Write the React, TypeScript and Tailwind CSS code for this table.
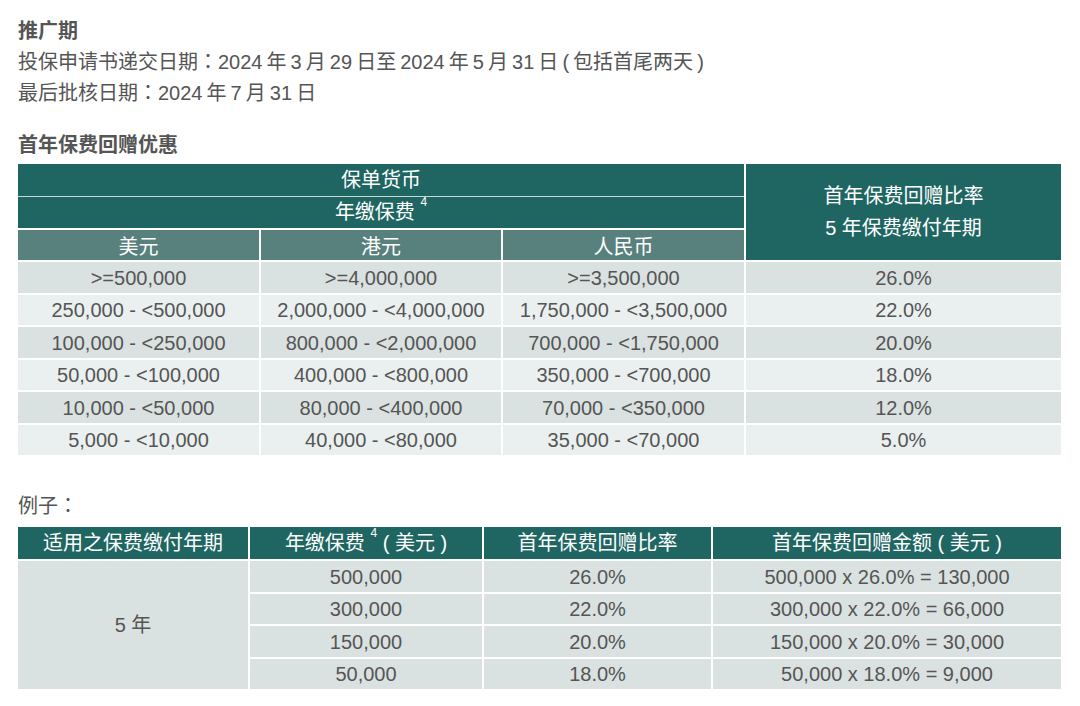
const font = { fontFamily: '"Liberation Sans", "Noto Sans CJK SC", sans-serif' };

const tiers = [
  [">=500,000", ">=4,000,000", ">=3,500,000", "26.0%"],
  ["250,000 - <500,000", "2,000,000 - <4,000,000", "1,750,000 - <3,500,000", "22.0%"],
  ["100,000 - <250,000", "800,000 - <2,000,000", "700,000 - <1,750,000", "20.0%"],
  ["50,000 - <100,000", "400,000 - <800,000", "350,000 - <700,000", "18.0%"],
  ["10,000 - <50,000", "80,000 - <400,000", "70,000 - <350,000", "12.0%"],
  ["5,000 - <10,000", "40,000 - <80,000", "35,000 - <70,000", "5.0%"],
];

const examples = [
  ["500,000", "26.0%", "500,000 x 26.0% = 130,000"],
  ["300,000", "22.0%", "300,000 x 22.0% = 66,000"],
  ["150,000", "20.0%", "150,000 x 20.0% = 30,000"],
  ["50,000", "18.0%", "50,000 x 18.0% = 9,000"],
];

const th = "border-2 border-white bg-[#1f6663] text-white font-normal text-center p-0";
const td = "border-2 border-white text-center text-[#555555] p-0";

// centred full-width colon, as in the source document
function Colon() {
  return <span style={{ fontFamily: '"Noto Sans CJK TC", sans-serif' }}>：</span>;
}

export default function App() {
  return (
    <div className="min-h-[706px] bg-white px-[18px] pt-[16px] text-[20px] leading-[30px] text-[#555555]" style={font}>
      <p className="font-bold">推广期</p>
      <p className="[word-spacing:-1.5px]">
        投保申请书递交日期<Colon />2024 年 3 月 29 日至 2024 年 5 月 31 日 ( 包括首尾两天 )
      </p>
      <p className="[word-spacing:-1.5px]">
        最后批核日期<Colon />2024 年 7 月 31 日
      </p>
      <p className="mt-[22px] font-bold">首年保费回赠优惠</p>

      <table className="mt-[2px] -mx-[2px] w-[1047px] border-collapse table-fixed leading-none">
        <colgroup>
          <col className="w-[243px]" />
          <col className="w-[242px]" />
          <col className="w-[243px]" />
          <col />
        </colgroup>
        <thead>
          <tr className="h-[33px]">
            <th colSpan={3} className={th + " border-b border-b-[#c9d8d6]"}>保单货币</th>
            <th rowSpan={3} className={th + " leading-[32px]"}>
              首年保费回赠比率
              <br />5 年保费缴付年期
            </th>
          </tr>
          <tr className="h-[33px]">
            <th colSpan={3} className={th + " border-t border-t-[#c9d8d6]"}>
              年缴保费 <sup className="text-[12px] align-[7px]">4</sup>
            </th>
          </tr>
          <tr className="h-[32px]">
            {["美元", "港元", "人民币"].map((c) => (
              <th key={c} className={th.replace("bg-[#1f6663]", "bg-[#58817d]") + " pt-[3px]"}>{c}</th>
            ))}
          </tr>
        </thead>
        <tbody>
          {tiers.map((r, i) => (
            <tr
              key={i}
              className={
                (i % 2 === 0 ? "h-[33px] bg-[#dae2e1]" : "h-[32px] bg-[#eaf0f0]")
              }
            >
              {r.map((c, j) => (
                <td key={j} className={td}>{c}</td>
              ))}
            </tr>
          ))}
        </tbody>
      </table>

      <p className="mt-[33px] [word-spacing:-1.5px]">
        例子<Colon />
      </p>

      <table className="mt-[4px] -mx-[2px] w-[1047px] border-collapse table-fixed leading-none">
        <colgroup>
          <col className="w-[232px]" />
          <col className="w-[234px]" />
          <col className="w-[229px]" />
          <col />
        </colgroup>
        <thead>
          <tr className="h-[34px]">
            <th className={th}>适用之保费缴付年期</th>
            <th className={th}>
              年缴保费 <sup className="text-[12px] align-[7px]">4</sup> ( 美元 )
            </th>
            <th className={th}>首年保费回赠比率</th>
            <th className={th}>首年保费回赠金额 ( 美元 )</th>
          </tr>
        </thead>
        <tbody>
          {examples.map((r, i) => (
            <tr key={i} className={(i % 2 === 0 ? "h-[33px]" : "h-[32px]") + " bg-[#dae2e1]"}>
              {i === 0 && (
                <td rowSpan={4} className={td}>5 年</td>
              )}
              {r.map((c, j) => (
                <td key={j} className={td}>{c}</td>
              ))}
            </tr>
          ))}
        </tbody>
      </table>
    </div>
  );
}
